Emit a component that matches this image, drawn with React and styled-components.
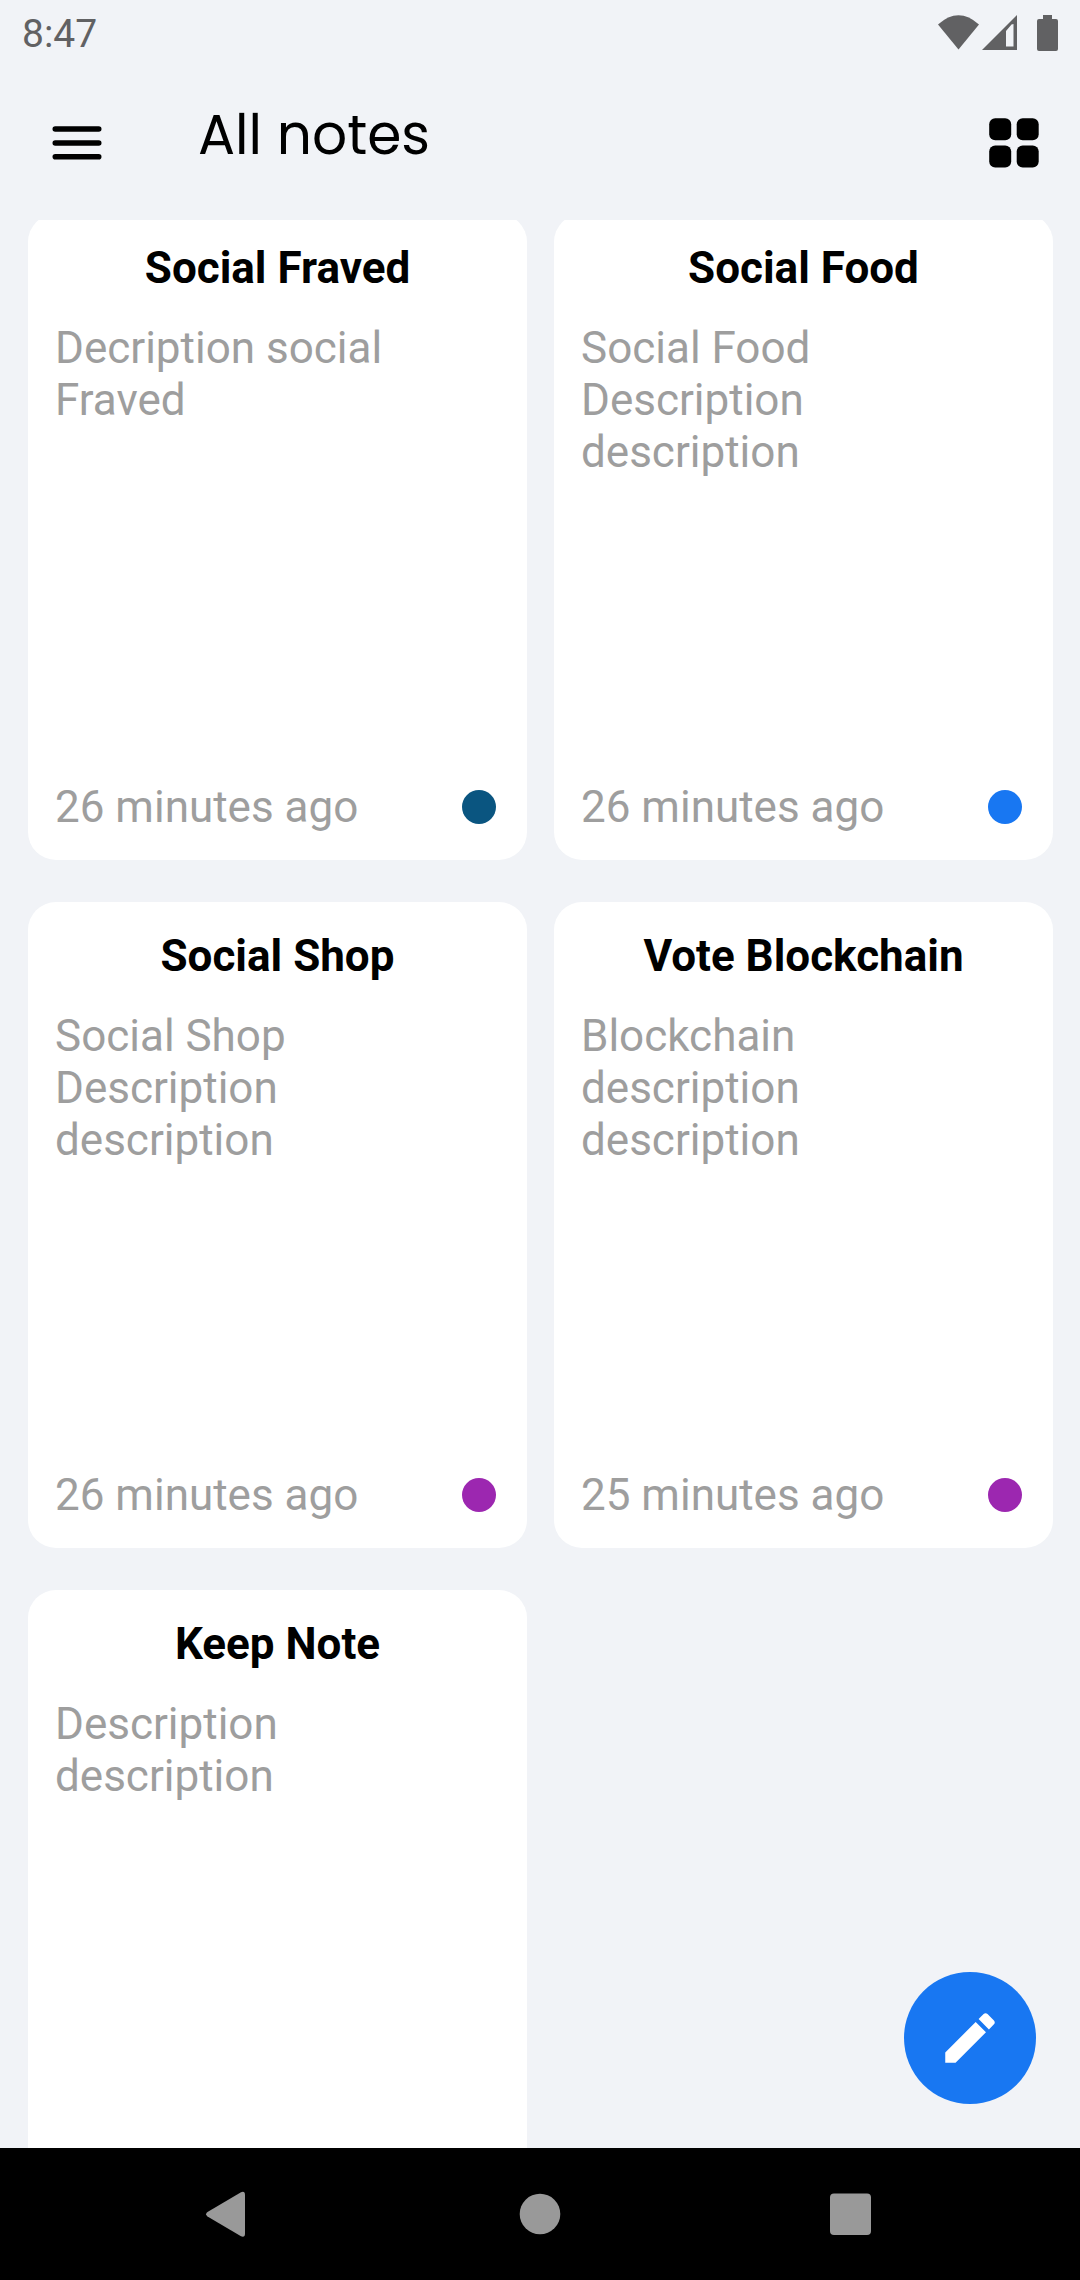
import React from "react";
import styled, { createGlobalStyle } from "styled-components";

const GlobalStyle = createGlobalStyle`
  *, *::before, *::after { box-sizing: border-box; }
  body {
    margin: 0;
    background: #f1f3f7;
    color: #000;
    font-family: Roboto, "Noto Sans", sans-serif;
  }
`;

const Screen = styled.div`
  display: flex;
  flex-direction: column;
  height: 100vh;
  background: #f1f3f7;
`;

const StatusBar = styled.div`
  flex: none;
  display: flex;
  align-items: center;
  justify-content: space-between;
  height: 66px;
  padding: 0 20px 0 22px;
  color: #616163;
`;

const Clock = styled.time`
  padding-top: 2px;
  font-size: 39px;
  line-height: 44px;
`;

const StatusIcons = styled.svg`
  display: block;
  width: 124px;
  height: 66px;
`;

const Toolbar = styled.header`
  flex: none;
  display: flex;
  align-items: center;
  height: 154px;
`;

const IconButton = styled.button`
  flex: none;
  display: flex;
  align-items: center;
  justify-content: center;
  width: ${({ $width }) => $width}px;
  height: ${({ $height }) => $height}px;
  padding: 0;
  border: 0;
  background: none;
  color: inherit;
  cursor: pointer;
`;

const Icon = styled.svg`
  display: block;
  width: ${({ $size }) => $size}px;
  height: ${({ $size }) => $size}px;
  fill: currentColor;
`;

const PageTitle = styled.h1`
  flex: 1;
  margin: 0;
  padding: 0 0 16px 44px;
  font-family: Poppins, Inter, sans-serif;
  font-size: 55px;
  font-weight: 400;
  line-height: 64px;
`;

const Body = styled.div`
  position: relative;
  flex: 1;
  min-height: 0;
`;

const Scroller = styled.main`
  height: 100%;
  overflow-y: auto;
  scrollbar-width: none;
`;

const NoteGrid = styled.div`
  display: grid;
  grid-template-columns: 1fr 1fr;
  gap: 42px 27px;
  margin-top: -6px;
  padding: 0 27px 42px 28px;
`;

const NoteCard = styled.article`
  display: flex;
  flex-direction: column;
  gap: 28px;
  min-height: 646px;
  padding: 28px 27px 27px;
  border-radius: 28px;
  background: #fff;
  font-size: 44px;
  line-height: 52px;
`;

const NoteTitle = styled.h2`
  margin: 0;
  font-size: 44px;
  font-weight: 700;
  line-height: 52px;
  text-align: center;
`;

const NoteText = styled.p`
  flex: 1;
  margin: 0;
  color: #9e9e9e;
  white-space: pre-line;
`;

const NoteFooter = styled.footer`
  display: flex;
  align-items: center;
  justify-content: space-between;
  padding-right: 4px;
  color: #9e9e9e;
`;

const Dot = styled.span`
  width: 34px;
  height: 34px;
  border-radius: 50%;
  background: ${({ $color }) => $color};
`;

const Fab = styled.button`
  position: absolute;
  right: 44px;
  bottom: 44px;
  display: flex;
  align-items: center;
  justify-content: center;
  width: 132px;
  height: 132px;
  padding: 0;
  border: 0;
  border-radius: 50%;
  background: #1877f2;
  color: #fff;
  cursor: pointer;
`;

const NavBar = styled.nav`
  flex: none;
  display: flex;
  justify-content: space-evenly;
  background: #000;
  color: #999;
`;

const notes = [
  { title: "Social Fraved", text: "Decription social Fraved", time: "26 minutes ago", color: "#0a5580" },
  { title: "Social Food", text: "Social Food\nDescription\ndescription", time: "26 minutes ago", color: "#1877f2" },
  { title: "Social Shop", text: "Social Shop\nDescription\ndescription", time: "26 minutes ago", color: "#9c27b0" },
  { title: "Vote Blockchain", text: "Blockchain\ndescription\ndescription", time: "25 minutes ago", color: "#9c27b0" },
  { title: "Keep Note", text: "Description\ndescription" },
];

function Note({ title, text, time, color }) {
  return (
    <NoteCard>
      <NoteTitle>{title}</NoteTitle>
      <NoteText>{text}</NoteText>
      {time && (
        <NoteFooter>
          <span>{time}</span>
          <Dot $color={color} />
        </NoteFooter>
      )}
    </NoteCard>
  );
}

export default function App() {
  return (
    <>
      <GlobalStyle />
      <Screen>
        <StatusBar>
          <Clock>8:47</Clock>
          <StatusIcons viewBox="936 0 124 66" fill="currentColor" aria-hidden="true">
            <path d="M938 24.500Q958.500 6 979 24.500L958.500 49.500Z" />
            <path fillRule="evenodd" d="M982 50L1017 15V50ZM1006 31V46.500H1013.500V24L1011.500 24.500Z" />
            <path d="M1043 15H1052V19H1056Q1058 19 1058 21V49Q1058 51 1056 51H1039Q1037 51 1037 49V21Q1037 19 1039 19H1043Z" />
          </StatusIcons>
        </StatusBar>
        <Toolbar>
          <IconButton $width={154} $height={154} aria-label="Open menu">
            <Icon $size={50} viewBox="0 0 50 50">
              <rect x="0.500" y="8.200" width="49" height="5.600" rx="2.800" />
              <rect x="0.500" y="22.200" width="49" height="5.600" rx="2.800" />
              <rect x="0.500" y="36" width="49" height="5.600" rx="2.800" />
            </Icon>
          </IconButton>
          <PageTitle>All notes</PageTitle>
          <IconButton $width={132} $height={154} aria-label="Change layout">
            <Icon $size={50} viewBox="0 0 50 50">
              <rect x="0.200" y="0.200" width="22" height="22" rx="6" />
              <rect x="27.700" y="0.200" width="22" height="22" rx="6" />
              <rect x="0.200" y="27.500" width="22" height="22" rx="6" />
              <rect x="27.700" y="27.500" width="22" height="22" rx="6" />
            </Icon>
          </IconButton>
        </Toolbar>
        <Body>
          <Scroller>
            <NoteGrid>
              {notes.map((note) => (
                <Note key={note.title} {...note} />
              ))}
            </NoteGrid>
          </Scroller>
          <Fab aria-label="New note">
            <Icon $size={66} viewBox="0 0 24 24">
              <path d="M3 17.250V21h3.750L17.810 9.940l-3.750-3.750L3 17.250zM20.710 7.040c.39-.39.39-1.020 0-1.410l-2.340-2.340c-.39-.39-1.020-.39-1.410 0l-1.830 1.830 3.750 3.750 1.830-1.830z" />
            </Icon>
          </Fab>
        </Body>
        <NavBar>
          <IconButton $width={164} $height={132} aria-label="Back">
            <Icon $size={48} viewBox="0 0 48 48">
              <path d="M2.500 22Q-0.300 24.200 2.500 26.400L36 46.300Q40 47.800 40 43.500V5Q40 0.700 36 2.200Z" />
            </Icon>
          </IconButton>
          <IconButton $width={164} $height={132} aria-label="Home">
            <Icon $size={48} viewBox="0 0 48 48">
              <circle cx="24" cy="24" r="20.300" />
            </Icon>
          </IconButton>
          <IconButton $width={164} $height={132} aria-label="Recent apps">
            <Icon $size={48} viewBox="0 0 48 48">
              <rect x="3" y="3.500" width="41" height="41.500" rx="4" />
            </Icon>
          </IconButton>
        </NavBar>
      </Screen>
    </>
  );
}
